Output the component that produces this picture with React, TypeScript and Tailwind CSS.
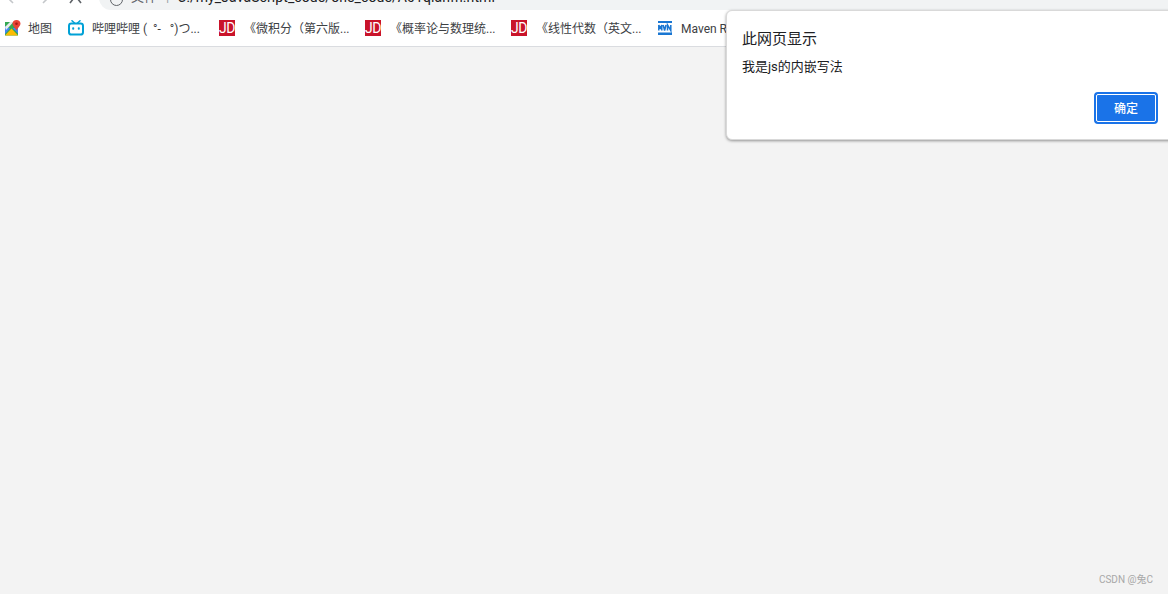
import React from "react";

const cjk = "font-['Roboto','Noto_Sans_CJK_SC',sans-serif]";

function MapIcon() {
  return (
    <svg width="16" height="16" viewBox="0 0 16 16" className="shrink-0">
      <rect x="0" y="2" width="13" height="13.5" fill="#34a853" />
      <path d="M0 15.5 L6.5 8.5 L13 15.5 Z" fill="#fbbc04" />
      <path d="M0 6 L0 14 L5 8.5 Z" fill="#4285f4" />
      <path d="M7.5 8 L13 13.5 L13 8 Z" fill="#4285f4" />
      <path d="M5 2 L8.5 2 L1 10 L0 7 Z" fill="#e8eaed" />
      <path d="M11.5 0 C13.8 0 15.5 1.6 15.5 3.7 C15.5 5.8 13 7.5 11.5 10.5 C10 7.5 7.5 5.8 7.5 3.7 C7.5 1.6 9.2 0 11.5 0 Z" fill="#ea4335" />
      <circle cx="11.5" cy="3.7" r="1.3" fill="#a51c14" />
    </svg>
  );
}

function BiliIcon() {
  return (
    <svg width="16" height="16" viewBox="0 0 16 16" className="shrink-0">
      <path d="M4 0.7 L6.5 3 M12 0.7 L9.5 3" stroke="#00a1d6" strokeWidth="1.5" strokeLinecap="round" />
      <rect x="1" y="3.4" width="14" height="11.2" rx="2.4" fill="none" stroke="#00a1d6" strokeWidth="2" />
      <rect x="4.2" y="7.2" width="2" height="2.6" rx="0.8" fill="#00a1d6" />
      <rect x="9.8" y="7.2" width="2" height="2.6" rx="0.8" fill="#00a1d6" />
    </svg>
  );
}

function JdIcon() {
  return (
    <div className="w-4 h-4 shrink-0 bg-[#c9132a] text-white flex items-center justify-center text-[14px] leading-none font-['Roboto',sans-serif] tracking-[-0.5px]">
      JD
    </div>
  );
}

function MvnIcon() {
  return (
    <svg width="15" height="16" viewBox="0 0 15 16" className="shrink-0">
      <rect x="0" y="1" width="14" height="2" fill="#1976d2" />
      <rect x="0" y="12.5" width="14" height="2.5" fill="#1976d2" />
      <path d="M0.8 10.5 V5 L2.3 8 L3.8 5 V10.5 M5.2 5 L6.6 10.5 L8 5 M9.5 10.5 V5 L12.8 10.5 V5" fill="none" stroke="#1976d2" strokeWidth="1.5" />
    </svg>
  );
}

function Bookmark({ icon, label, w, gap = "gap-2" }: { icon: React.ReactNode; label: string; w: string; gap?: string }) {
  return (
    <div className={`flex items-center shrink-0 overflow-hidden ${gap} ${w}`}>
      {icon}
      <span className="text-[12px] leading-4 mt-[2px] text-[#3c4043] whitespace-pre">{label}</span>
    </div>
  );
}

export default function App() {
  return (
    <div className={`w-[1168px] h-[594px] overflow-hidden relative bg-[#f3f3f3] flex flex-col ${cjk}`}>
      <div className="h-[10px] bg-white flex shrink-0 overflow-hidden">
        <svg width="99" height="10" viewBox="0 0 99 10" className="shrink-0">
          <path d="M8 -2 L13 3" fill="none" stroke="#c4c7ca" strokeWidth="1.6" />
          <path d="M48 -2 L43 3" fill="none" stroke="#c4c7ca" strokeWidth="1.6" />
          <path d="M75.5 -4 L70 3 M75.5 -4 L81 3" fill="none" stroke="#5f6368" strokeWidth="1.6" />
        </svg>
        <div className="flex-1 -mt-[14px] h-6 bg-[#f1f3f4] rounded-l-[14px] flex items-end pl-[11px] pb-[5px]">
          <div className="w-[13px] h-[13px] rounded-full border-[1.5px] border-[#5f6368] shrink-0 -mb-[1px]" />
          <span className="text-[13px] leading-4 text-[#5f6368] ml-[8px]">文件</span>
          <span className="text-[13px] leading-4 text-[#9aa0a6] ml-[9px]">|</span>
          <span className="text-[14px] leading-4 text-[#202124] ml-[8px] tracking-[0.09px]">C:/my_JavaScript_code/one_code/A01qianfh.html</span>
        </div>
      </div>
      <div className="h-[36px] bg-white border-b border-[#dadce0] shrink-0 flex items-center pl-[5px] box-content -mb-[1px]">
        <Bookmark icon={<MapIcon />} label="地图" w="w-[63px]" gap="gap-[7px]" />
        <Bookmark icon={<BiliIcon />} label="哔哩哔哩 (  °-   °)つ..." w="w-[151px]" />
        <Bookmark icon={<JdIcon />} label="《微积分（第六版..." w="w-[146px]" gap="gap-[9px]" />
        <Bookmark icon={<JdIcon />} label="《概率论与数理统..." w="w-[146px]" gap="gap-[9px]" />
        <Bookmark icon={<JdIcon />} label="《线性代数（英文..." w="w-[147px]" gap="gap-[9px]" />
        <Bookmark icon={<MvnIcon />} label="Maven Repository" w="w-[68px]" gap="gap-[8px]" />
      </div>
      <div className="flex-1" />
      <div className="absolute left-[726px] top-[10px] w-[460px] h-[130px] bg-white rounded-[6px] border border-[#d9d9d9] shadow-[0_1px_3px_rgba(0,0,0,0.4)] flex flex-col pl-[15px] pr-[27px]">
        <div className="text-[15px] leading-5 text-[#202124] mt-[18px]">此网页显示</div>
        <div className="text-[13px] leading-4 text-[#202124] mt-[10px]">我是js的内嵌写法</div>
        <div className="flex justify-end mt-[17px]">
          <button className="w-[64px] h-[32px] rounded-[4px] bg-[#1a73e8] border-2 border-[#1a73e8] outline outline-1 -outline-offset-3 outline-white text-white text-[12px] font-medium pt-[1px]">确定</button>
        </div>
      </div>
      <div className="absolute right-[15px] top-[574px] text-[10px] leading-3 text-[#a8a8a8]">CSDN @兔C</div>
    </div>
  );
}
